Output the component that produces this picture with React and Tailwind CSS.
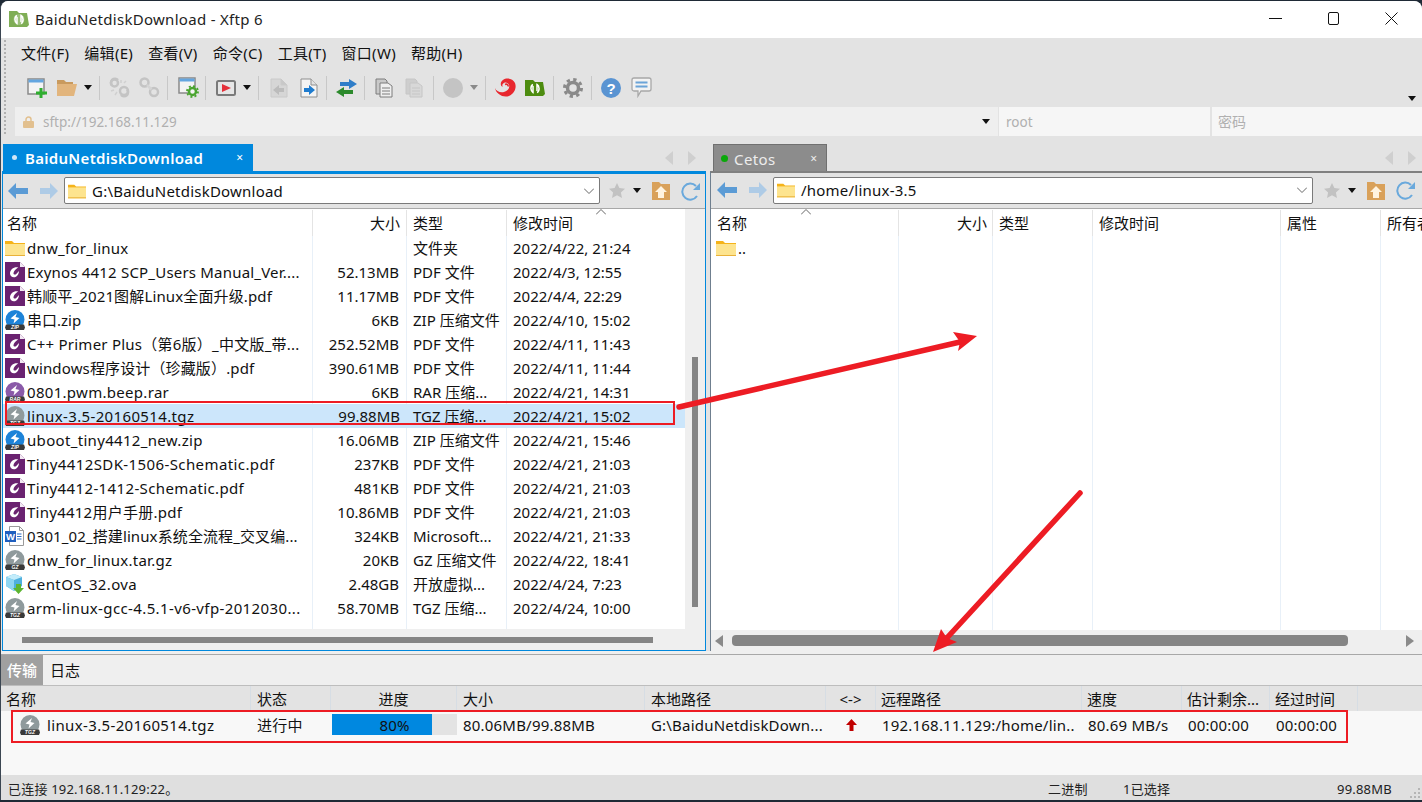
import React from "react";

const files = [
  { name: "dnw_for_linux", size: "", type: "文件夹", date: "2022/4/22, 21:24", icon: "folder", track: "tracking-[0.25px]" },
  { name: "Exynos 4412 SCP_Users Manual_Ver....", size: "52.13MB", type: "PDF 文件", date: "2022/4/3, 12:55", icon: "pdf", track: "tracking-[0.2px]" },
  { name: "韩顺平_2021图解Linux全面升级.pdf", size: "11.17MB", type: "PDF 文件", date: "2022/4/4, 22:29", icon: "pdf", track: "tracking-[0.14px]" },
  { name: "串口.zip", size: "6KB", type: "ZIP 压缩文件", date: "2022/4/10, 15:02", icon: "zip", track: "" },
  { name: "C++ Primer Plus（第6版）_中文版_带...", size: "252.52MB", type: "PDF 文件", date: "2022/4/11, 11:43", icon: "pdf", track: "tracking-[0.24px]" },
  { name: "windows程序设计（珍藏版）.pdf", size: "390.61MB", type: "PDF 文件", date: "2022/4/11, 11:44", icon: "pdf", track: "tracking-[0.14px]" },
  { name: "0801.pwm.beep.rar", size: "6KB", type: "RAR 压缩...", date: "2022/4/21, 14:31", icon: "rar", track: "tracking-[0.3px]" },
  { name: "linux-3.5-20160514.tgz", size: "99.88MB", type: "TGZ 压缩...", date: "2022/4/21, 15:02", icon: "tgz", selected: true, track: "tracking-[0.36px]" },
  { name: "uboot_tiny4412_new.zip", size: "16.06MB", type: "ZIP 压缩文件", date: "2022/4/21, 15:46", icon: "zip", track: "tracking-[0.32px]" },
  { name: "Tiny4412SDK-1506-Schematic.pdf", size: "237KB", type: "PDF 文件", date: "2022/4/21, 21:03", icon: "pdf", track: "tracking-[0.4px]" },
  { name: "Tiny4412-1412-Schematic.pdf", size: "481KB", type: "PDF 文件", date: "2022/4/21, 21:03", icon: "pdf", track: "tracking-[0.37px]" },
  { name: "Tiny4412用户手册.pdf", size: "10.86MB", type: "PDF 文件", date: "2022/4/21, 21:03", icon: "pdf", track: "tracking-[0.25px]" },
  { name: "0301_02_搭建linux系统全流程_交叉编...", size: "324KB", type: "Microsoft...", date: "2022/4/21, 21:33", icon: "word", track: "tracking-[0.11px]" },
  { name: "dnw_for_linux.tar.gz", size: "20KB", type: "GZ 压缩文件", date: "2022/4/22, 18:41", icon: "gz", track: "tracking-[0.25px]" },
  { name: "CentOS_32.ova", size: "2.48GB", type: "开放虚拟...", date: "2022/4/24, 7:23", icon: "ova", track: "tracking-[0.38px]" },
  { name: "arm-linux-gcc-4.5.1-v6-vfp-2012030...", size: "58.70MB", type: "TGZ 压缩...", date: "2022/4/24, 10:00", icon: "tgz", track: "tracking-[0.38px]" },
];

const FolderIcon = ({ size = 20 }) => (
  <svg width={size} height={size} viewBox="0 0 20 20" className="shrink-0">
    <path d="M0 3h7l2 2h11v13H0z" fill="#f5b31a" />
    <rect x="0" y="6" width="20" height="12" fill="#fde48f" />
    <rect x="0" y="17" width="20" height="1" fill="#e9b23a" />
  </svg>
);

const PdfIcon = () => (
  <svg width="20" height="20" viewBox="0 0 20 20" className="shrink-0">
    <path d="M0 0h15l5 5v15H0z" fill="#6a2270" />
    <path d="M15 0v5h5z" fill="#f3eaf4" />
    <path d="M13.500 5.500C9 4.500 5 7.500 5 11.500c0 3 3 4.500 5.500 3.500 2.300-1 3.500-3.500 3.500-6l-3 3.200c-.8.800-2.800.5-2.500-1.200.3-2 2.500-4 4.500-5.500z" fill="#fff" />
  </svg>
);

const ArchiveIcon = ({ color, label }) => (
  <svg width="20" height="20" viewBox="0 0 20 20" className="shrink-0">
    <circle cx="10" cy="9.500" r="9.500" fill={color} />
    <path d="M5.500 8.500L12 3l-1.500 4 4 1-6 5.500 1-4z" fill="#fff" />
    <path d="M1 14.500h18l1 3-1 2.500H1L0 17.500z" fill="#3a3a3a" />
    <text x="10" y="19" textAnchor="middle" fontSize="5" fontWeight="700" fontStyle="italic" fill="#fff" className="[font-family:'Liberation_Sans',sans-serif]">
      {label}
    </text>
  </svg>
);

const WordIcon = () => (
  <svg width="20" height="20" viewBox="0 0 20 20" className="shrink-0">
    <path d="M4.500 .5h10l4 4v15h-14z" fill="#fff" stroke="#9a9a9a" />
    <path d="M14.500 .5v4h4" fill="none" stroke="#9a9a9a" />
    <path d="M12 8h4.500M12 10.500h4.500M12 13h4.500" stroke="#2b6cc4" />
    <rect x="0" y="5" width="11" height="11" fill="#1f5fbf" />
    <text x="5.500" y="14" textAnchor="middle" fontSize="9.500" fontWeight="700" fill="#fff" className="[font-family:'Liberation_Sans',sans-serif]">
      W
    </text>
  </svg>
);

const OvaIcon = () => (
  <svg width="20" height="20" viewBox="0 0 20 20" className="shrink-0">
    <path d="M9 0l8 3v9l-8 5-8-5V3z" fill="#4fb0de" />
    <path d="M1 3l8 3 8-3-8-3z" fill="#c3ecfa" />
    <path d="M9 6v11l-8-5V3z" fill="#8fd6f2" />
    <path d="M11 10h5v4h3l-5.500 6L8 14h3z" fill="#5cb531" />
  </svg>
);

const FileIcon = ({ kind }) => {
  if (kind === "folder") return <FolderIcon />;
  if (kind === "pdf") return <PdfIcon />;
  if (kind === "zip") return <ArchiveIcon color="#1d83d8" label="ZIP" />;
  if (kind === "rar") return <ArchiveIcon color="#8a5aa8" label="RAR" />;
  if (kind === "tgz") return <ArchiveIcon color="#8f9a9c" label="TGZ" />;
  if (kind === "gz") return <ArchiveIcon color="#8f9a9c" label="GZ" />;
  if (kind === "word") return <WordIcon />;
  return <OvaIcon />;
};

const Drop = ({ color = "#111", className = "" }) => (
  <svg width="8" height="5" viewBox="0 0 8 5" className={`shrink-0 ${className}`}>
    <path d="M0 0h8L4 5z" fill={color} />
  </svg>
);

const Sep = ({ className = "" }) => <div className={`w-px h-[24px] bg-[#c8c8c8] shrink-0 ${className}`} />;

const DocIcon = ({ right }) => (
  <svg width="18" height="20" viewBox="0 0 18 20" className="shrink-0">
    <path d="M1 1h10l6 6v12H1z" fill={right ? "#f4f4f4" : "#d6d6d6"} stroke={right ? "#8f8f8f" : "#cacaca"} />
    <path d="M11 1v6h6" fill={right ? "#e2e2e2" : "#c8c8c8"} stroke={right ? "#8f8f8f" : "#cacaca"} />
    {right ? (
      <path d="M4 10h5V7l6 5-6 5v-3H4z" fill="#1f7ccf" />
    ) : (
      <path d="M14 10H9V7l-6 5 6 5v-3h5z" fill="#bcbcbc" />
    )}
  </svg>
);

const CopyIcon = ({ faded }) => {
  const edge = faded ? "#c6c6c6" : "#7d7d7d";
  return (
    <svg width="18" height="20" viewBox="0 0 18 20" className="shrink-0">
      <path d="M1 1h9l2 2v13H1z" fill={faded ? "#cecece" : "#c9c9c9"} stroke={edge} />
      <path d="M5 5h8l4 3v11H5z" fill={faded ? "#d8d8d8" : "#efefef"} stroke={edge} />
      <path d="M7 10h8M7 13h8M7 16h8" stroke={edge} />
    </svg>
  );
};

const LinkIcon = ({ broken }) => (
  <svg width="21" height="21" viewBox="0 0 21 21" className="shrink-0">
    {broken ? (
      <>
        <path d="M9 3A4 4 0 0 0 3 8.500" fill="none" stroke="#c4c4c4" strokeWidth="2.500" />
        <path d="M12 18a4 4 0 0 0 6-5.500" fill="none" stroke="#c4c4c4" strokeWidth="2.500" />
        <path d="M12 3v3M15 6l2-2M2 14l3-1M6 18l2-3" stroke="#d0d0d0" strokeWidth="1.500" />
        <circle cx="15" cy="14" r="4" fill="none" stroke="#c4c4c4" strokeWidth="2.500" />
        <circle cx="5.500" cy="6" r="3.500" fill="none" stroke="#c4c4c4" strokeWidth="2.500" />
      </>
    ) : (
      <>
        <circle cx="5.500" cy="5.500" r="4" fill="none" stroke="#c4c4c4" strokeWidth="2.500" />
        <circle cx="15" cy="15" r="4" fill="none" stroke="#c4c4c4" strokeWidth="2.500" />
        <path d="M8 8l4.500 4.500" stroke="#d4d4d4" strokeWidth="2.500" />
      </>
    )}
  </svg>
);

const GearIcon = ({ size = 20, color = "#8a8a8a" }) => (
  <svg width={size} height={size} viewBox="0 0 20 20" className="shrink-0">
    <circle cx="10" cy="10" r="5.500" fill="none" stroke={color} strokeWidth="3.500" />
    <circle cx="10" cy="10" r="8.500" fill="none" stroke={color} strokeWidth="3" strokeDasharray="3.300 3.370" />
  </svg>
);

const NewSessionIcon = () => (
  <svg width="20" height="20" viewBox="0 0 20 20" className="shrink-0">
    <rect x="1" y="1" width="16" height="15" fill="#f4f4f4" stroke="#8a8a8a" strokeWidth="1.500" />
    <rect x="1.500" y="1.500" width="15" height="3" fill="#64a6e0" />
    <path d="M12.500 10h3v3.500H20v3h-4.500V20h-3v-3.500H9v-3h3.500z" fill="#2fae2f" />
  </svg>
);

const OpenIcon = () => (
  <svg width="20" height="16" viewBox="0 0 20 16" className="shrink-0">
    <path d="M0 0h7l2 2h7v3H0z" fill="#c99a5e" />
    <path d="M0 4h20l-3 12H0z" fill="#e2b57d" />
  </svg>
);

const SessionGearIcon = () => (
  <svg width="21" height="21" viewBox="0 0 21 21" className="shrink-0">
    <rect x="1" y="1" width="16" height="15" fill="#f4f4f4" stroke="#8a8a8a" strokeWidth="1.500" />
    <rect x="1.500" y="1.500" width="15" height="3" fill="#64a6e0" />
    <circle cx="14.500" cy="14.500" r="3.500" fill="#f4f4f4" stroke="#4aa52f" strokeWidth="2.500" />
    <circle cx="14.500" cy="14.500" r="5.500" fill="none" stroke="#4aa52f" strokeWidth="1.800" strokeDasharray="2 2.300" />
  </svg>
);

const ScreenIcon = () => (
  <svg width="20" height="16" viewBox="0 0 20 16" className="shrink-0">
    <rect x="1" y="1" width="18" height="14" rx="1.500" fill="#e6e6e6" stroke="#7a7a7a" strokeWidth="2" />
    <path d="M6 4l9 4-9 4z" fill="#e5303a" />
  </svg>
);

const SwapIcon = () => (
  <svg width="21" height="18" viewBox="0 0 21 18" className="shrink-0">
    <path d="M4 3h9V0l8 5-8 5V7H4z" fill="#2f7dc8" />
    <path d="M17 11H8V8l-8 5 8 5v-3h9z" fill="#2c8a2c" />
  </svg>
);

const SwirlIcon = () => (
  <svg width="21" height="21" viewBox="0 0 21 21" className="shrink-0">
    <path d="M0 11c1 3 5 5 9 4 4-1 6-4 5-7-.7-2-3-3-5-2-2 1-2 3-1 4-3-1-3-5 0-7 4-3 10-1 12 3 2 5-1 11-6 13-6 2-13-2-14-8z" fill="#e8272e" />
    <path d="M10 7.500c2-1 3.500.5 3 2" stroke="#e8272e" strokeWidth="1.600" fill="none" />
  </svg>
);

const XftpIcon = ({ light }) => (
  <svg width="20" height="16" viewBox="0 0 20 16" className="shrink-0">
    <path d="M0 0h8l2 2h8l2 12-2 2H0z" fill={light ? "#7fae55" : "#4d8c10"} />
    <circle cx="10" cy="8.500" r="5.500" fill={light ? "#eef5e6" : "none"} opacity={light ? 0.25 : 1} />
    <path d="M8 4.500C5 6 5.500 11 8 12.500V6M12 12.500c3-1.500 2.500-6.500 0-8V11" stroke="#fff" strokeWidth="1.500" fill="none" />
  </svg>
);

const HelpIcon = () => (
  <svg width="20" height="20" viewBox="0 0 20 20" className="shrink-0">
    <circle cx="10" cy="10" r="10" fill="#5a94d2" />
    <text x="10" y="15.500" textAnchor="middle" fontSize="15" fontWeight="700" fill="#fff" className="[font-family:'Liberation_Sans',sans-serif]">
      ?
    </text>
  </svg>
);

const ChatIcon = () => (
  <svg width="21" height="21" viewBox="0 0 21 21" className="shrink-0">
    <path d="M3 1h15a2 2 0 0 1 2 2v9a2 2 0 0 1-2 2h-8l-3 5v-5H3a2 2 0 0 1-2-2V3a2 2 0 0 1 2-2z" fill="#f3f3f3" stroke="#a8a8a8" strokeWidth="1.300" />
    <path d="M4.500 5.500h12M4.500 9.500h12" stroke="#6ba4d8" strokeWidth="2" />
  </svg>
);

const NavArrow = ({ dir, color }) => (
  <svg width="20" height="16" viewBox="0 0 20 16" className="shrink-0">
    {dir === "left" ? (
      <path d="M0 8l8-8v5h12v6H8v5z" fill={color} />
    ) : (
      <path d="M18 8l-8-8v5H0v6h10v5z" fill={color} />
    )}
  </svg>
);

const HomeFolder = () => (
  <svg width="18" height="19" viewBox="0 0 18 19" className="shrink-0">
    <path d="M0 1h7l2 2h9v16H0z" fill="#d9a15a" />
    <path d="M9 5l6 6h-3v6H6v-6H3z" fill="#fff3df" />
  </svg>
);

const RefreshIcon = () => (
  <svg width="20" height="20" viewBox="0 0 20 20" className="shrink-0">
    <path d="M16 5A8 8 0 1 0 17 15" fill="none" stroke="#6aa9dc" strokeWidth="2" />
    <path d="M13 9h7V2z" fill="#6aa9dc" />
  </svg>
);

const Star = () => (
  <svg width="16" height="15" viewBox="0 0 16 15" className="shrink-0">
    <path d="M8 0l2.400 5 5.600.7-4.100 3.800 1.100 5.500L8 12.300 3 15l1.100-5.500L0 5.700 5.600 5z" fill="#c2c2c2" />
  </svg>
);

const Chevron = ({ up }) => (
  <svg width="10" height="6" viewBox="0 0 10 6" className="shrink-0">
    <path d={up ? "M0 5.500l5-5 5 5" : "M0 .5l5 5 5-5"} fill="none" stroke="#666" />
  </svg>
);

const TabArrows = () => (
  <div className="flex items-center gap-[15px]">
    <svg width="8" height="14" viewBox="0 0 8 14"><path d="M8 0v14L0 7z" fill="#cfcfcf" /></svg>
    <svg width="8" height="14" viewBox="0 0 8 14"><path d="M0 0v14l8-7z" fill="#cfcfcf" /></svg>
  </div>
);

const NavBar = ({ path, height, backPad, inputW, toolsMl }) => (
  <div className={`${height} flex items-center bg-[#e3e3e3] border-b border-[#a8a8a8] pb-px shrink-0`}>
    <div className={`flex items-center gap-[12px] ${backPad}`}>
      <NavArrow dir="left" color="#5b9bd5" />
      <NavArrow dir="right" color="#aecbe6" />
    </div>
    <div className={`${inputW} h-[27px] ml-[4px] flex items-center bg-white border border-[#7a7a7a] rounded-[2px] pl-[3px] pr-[5px] shrink-0`}>
      <FolderIcon size={18} />
      <span className="ml-[6px] flex-1 text-[15px] leading-[20px] tracking-[0.22px] text-[#111] whitespace-nowrap">{path}</span>
      <Chevron />
    </div>
    <div className={`${toolsMl} flex items-center`}>
      <Star />
      <Drop className="ml-[8px]" />
      <div className="ml-[11px]"><HomeFolder /></div>
      <div className="ml-[10px]"><RefreshIcon /></div>
    </div>
  </div>
);

const Cell = ({ className = "", children }) => (
  <div className={`h-full flex items-center whitespace-nowrap shrink-0 ${className}`}>{children}</div>
);

const LocalRow = ({ file }) => (
  <div className={`h-[24px] flex text-[15px] leading-[20px] text-[#111] shrink-0 ${file.selected ? "bg-[#cce6fb]" : ""}`}>
    <Cell className={`w-[310px] pl-[2px] gap-[2px] overflow-hidden ${file.selected ? "" : "border-r border-[#e8f0f8]"}`}>
      <FileIcon kind={file.icon} />
      <span className={file.track}>{file.name}</span>
    </Cell>
    <Cell className={`w-[94px] justify-end pr-[7px] ${file.selected ? "" : "border-r border-[#e8f0f8]"}`}>{file.size}</Cell>
    <Cell className={`w-[100px] pl-[6px] ${file.selected ? "" : "border-r border-[#e8f0f8]"}`}>{file.type}</Cell>
    <Cell className="flex-1 pl-[6px]">{file.date}</Cell>
  </div>
);

const LocalPane = () => (
  <div className="w-[704px] h-full flex flex-col border-x border-[#0088dd] border-b border-t-[3px] bg-white shrink-0 box-border">
    <NavBar path="G:\BaiduNetdiskDownload" height="h-[35px]" backPad="pl-[5px]" inputW="w-[536px]" toolsMl="ml-[9px]" />
    <div className="flex-1 min-h-0 flex">
      <div className="w-[682px] flex flex-col shrink-0">
        <div className="relative h-[27px] flex pt-[1px] text-[15px] leading-[20px] text-[#111] shrink-0">
          <Cell className="w-[310px] pl-[4px] border-r border-[#e4e4e4]">名称</Cell>
          <Cell className="w-[94px] justify-end pr-[6px] border-r border-[#e4e4e4]">大小</Cell>
          <Cell className="w-[100px] pl-[6px] border-r border-[#e4e4e4]">类型</Cell>
          <Cell className="flex-1 pl-[6px]">修改时间</Cell>
          <div className="absolute left-[593px] top-0"><Chevron up /></div>
        </div>
        {files.map((file) => (
          <LocalRow key={file.name} file={file} />
        ))}
        <div className="flex-1 flex">
          <div className="w-[310px] border-r border-[#e8f0f8]" />
          <div className="w-[94px] border-r border-[#e8f0f8]" />
          <div className="w-[100px] border-r border-[#e8f0f8]" />
        </div>
        <div className="h-[21px] bg-[#efefef] flex items-center pl-[19px] shrink-0">
          <div className="w-[631px] h-[6px] bg-[#858585]" />
        </div>
      </div>
      <div className="flex-1 bg-[#efefef] pl-[7px] pt-[148px]">
        <div className="w-[6px] h-[250px] bg-[#858585]" />
      </div>
    </div>
  </div>
);

const RemotePane = () => (
  <div className="flex-1 min-w-0 h-full flex flex-col border-l border-[#6f7f8f] border-t-[2px] border-t-[#808080] bg-white box-border">
    <NavBar path="/home/linux-3.5" height="h-[36px]" backPad="pl-[6px]" inputW="w-[540px]" toolsMl="ml-[11px]" />
    <div className="flex-1 min-h-0 flex flex-col overflow-hidden">
      <div className="relative h-[27px] flex pt-[1px] text-[15px] leading-[20px] text-[#111] shrink-0">
        <Cell className="w-[188px] pl-[6px] border-r border-[#e4e4e4]">名称</Cell>
        <Cell className="w-[94px] justify-end pr-[5px] border-r border-[#e4e4e4]">大小</Cell>
        <Cell className="w-[100px] pl-[6px] border-r border-[#e4e4e4]">类型</Cell>
        <Cell className="w-[188px] pl-[6px] border-r border-[#e4e4e4]">修改时间</Cell>
        <Cell className="w-[100px] pl-[6px] border-r border-[#e4e4e4]">属性</Cell>
        <Cell className="flex-1 pl-[6px]">所有者</Cell>
        <div className="absolute left-[90px] top-0"><Chevron up /></div>
      </div>
      <div className="h-[24px] flex text-[15px] leading-[20px] text-[#111] shrink-0">
        <Cell className="w-[188px] pl-[5px] gap-[2px] border-r border-[#e8f0f8]">
          <FolderIcon />
          <span>..</span>
        </Cell>
        <div className="w-[94px] border-r border-[#e8f0f8]" />
        <div className="w-[100px] border-r border-[#e8f0f8]" />
        <div className="w-[188px] border-r border-[#e8f0f8]" />
        <div className="w-[100px] border-r border-[#e8f0f8]" />
      </div>
      <div className="flex-1 flex">
        <div className="w-[188px] border-r border-[#e8f0f8]" />
        <div className="w-[94px] border-r border-[#e8f0f8]" />
        <div className="w-[100px] border-r border-[#e8f0f8]" />
        <div className="w-[188px] border-r border-[#e8f0f8]" />
        <div className="w-[100px] border-r border-[#e8f0f8]" />
      </div>
      <div className="h-[21px] bg-[#efefef] flex items-center pl-[4px] pr-[8px] shrink-0">
        <svg width="8" height="12" viewBox="0 0 8 12"><path d="M8 0v12L0 6z" fill="#8a8a8a" /></svg>
        <div className="ml-[9px] w-[616px] h-[11px] rounded-[4px] bg-[#858585]" />
        <svg width="8" height="12" viewBox="0 0 8 12" className="ml-auto"><path d="M0 0v12l8-6z" fill="#8a8a8a" /></svg>
      </div>
    </div>
  </div>
);

const transferCols = [
  { w: "w-[250px]", label: "名称", cls: "pl-[5px]" },
  { w: "w-[80px]", label: "状态", cls: "pl-[6px]" },
  { w: "w-[126px]", label: "进度", cls: "justify-center" },
  { w: "w-[188px]", label: "大小", cls: "pl-[6px]" },
  { w: "w-[181px]", label: "本地路径", cls: "pl-[6px]" },
  { w: "w-[50px]", label: "<->", cls: "justify-center" },
  { w: "w-[206px]", label: "远程路径", cls: "pl-[5px]" },
  { w: "w-[100px]", label: "速度", cls: "pl-[5px]" },
  { w: "w-[88px]", label: "估计剩余...", cls: "pl-[5px]" },
  { w: "w-[88px]", label: "经过时间", cls: "pl-[5px]" },
];

const TransferPanel = () => (
  <div className="flex-1 min-h-0 flex flex-col border-t border-[#a8a8a8] bg-[#f8f8f8]">
    <div className="h-[30px] flex items-stretch bg-[#efefef] text-[15px] leading-[20px] shrink-0">
      <div className="w-[42px] flex items-center justify-center bg-[#a0a0a0] text-white font-medium">传输</div>
      <div className="w-[44px] flex items-center justify-center text-[#111]">日志</div>
    </div>
    <div className="h-[26px] flex bg-[#e3e3e3] border-t border-[#bdbdbd] text-[15px] leading-[20px] text-[#111] shrink-0">
      {transferCols.map((col) => (
        <Cell key={col.label} className={`${col.w} ${col.cls} border-r border-[#d6dde4]`}>{col.label}</Cell>
      ))}
    </div>
    <div className="h-[25px] flex text-[15px] leading-[20px] tracking-[0.2px] text-[#111] mt-[1px] shrink-0">
      <Cell className="w-[250px] pl-[19px] gap-[7px]">
        <ArchiveIcon color="#8f9a9c" label="TGZ" />
        <span className="tracking-[0.36px]">linux-3.5-20160514.tgz</span>
      </Cell>
      <Cell className="w-[80px] pl-[6px]">进行中</Cell>
      <Cell className="w-[126px] pl-px">
        <div className="relative w-[125px] h-[21px] bg-[#e3e3e3]">
          <div className="h-full w-[100px] bg-[#0088e0]" />
          <div className="absolute inset-0 flex items-center justify-center">80%</div>
        </div>
      </Cell>
      <Cell className="w-[188px] pl-[6px]">80.06MB/99.88MB</Cell>
      <Cell className="w-[181px] pl-[6px]">G:\BaiduNetdiskDown...</Cell>
      <Cell className="w-[50px] justify-center">
        <svg width="11" height="12" viewBox="0 0 11 12"><path d="M5.500 0L11 6H7.500v6h-4V6H0z" fill="#c00000" /></svg>
      </Cell>
      <Cell className="w-[206px] pl-[6px]">192.168.11.129:/home/lin..</Cell>
      <Cell className="w-[100px] pl-[6px]">80.69 MB/s</Cell>
      <Cell className="w-[88px] pl-[6px]">00:00:00</Cell>
      <Cell className="w-[88px] pl-[6px]">00:00:00</Cell>
    </div>
  </div>
);

const StatusBar = () => (
  <div className="relative h-[25px] flex items-center bg-[#dfdfdf] text-[13px] leading-[20px] tracking-[0.2px] text-[#222] pl-[7px] pt-[2px] shrink-0">
    <span className="w-[1040px]">已连接 192.168.11.129:22。</span>
    <span className="w-[75px]">二进制</span>
    <span className="w-[214px]">1已选择</span>
    <span>99.88MB</span>
    <svg width="10" height="10" viewBox="0 0 10 10" className="absolute right-[2px] bottom-[2px]">
      <path d="M8 0h2v2H8zM4 4h2v2H4zM8 4h2v2H8zM0 8h2v2H0zM4 8h2v2H4zM8 8h2v2H8z" fill="#b5b5b5" />
    </svg>
  </div>
);

const Annotations = () => (
  <svg width="1422" height="802" viewBox="0 0 1422 802" className="absolute left-0 top-0 pointer-events-none">
    <rect x="6" y="402" width="668" height="22" fill="none" stroke="#ed1c24" strokeWidth="2" />
    <rect x="12" y="711" width="1335" height="31" fill="none" stroke="#ed1c24" strokeWidth="2" />
    <path d="M679 407L960 342" stroke="#ed1c24" strokeWidth="5.500" strokeLinecap="round" />
    <path d="M977 336L953 332L960 342L958 351z" fill="#ed1c24" />
    <path d="M1080 493L945 640" stroke="#ed1c24" strokeWidth="5.500" strokeLinecap="round" />
    <path d="M933 652L941 629L947 638L957 642z" fill="#ed1c24" />
  </svg>
);

const App = () => {
  return (
    <div className="relative w-[1422px] h-[802px] overflow-hidden bg-[#1f2a36] [font-family:'Noto_Sans','Noto_Sans_CJK_SC',sans-serif]">
      <div className="h-[799px] mt-px flex flex-col rounded-t-[8px] overflow-hidden bg-[#e3e3e3] border-l border-[#3b4652]">
        <div className="h-[37px] flex items-center bg-white pl-[8px] pb-[2px] shrink-0">
          <XftpIcon light />
          <span className="ml-[6px] text-[15px] leading-[20px] tracking-[0.3px] text-[#222]">BaiduNetdiskDownload - Xftp 6</span>
          <div className="ml-auto flex items-center pr-[24px] gap-[45px]">
            <svg width="13" height="13" viewBox="0 0 13 13"><path d="M0 6.500h13" stroke="#111" /></svg>
            <svg width="13" height="13" viewBox="0 0 13 13"><rect x="1.500" y=".5" width="10" height="12" rx="1.500" fill="none" stroke="#111" /></svg>
            <svg width="13" height="13" viewBox="0 0 13 13"><path d="M.5.500l12 12M12.500.5l-12 12" stroke="#111" /></svg>
          </div>
        </div>

        <div className="h-[98px] flex shrink-0">
          <div className="w-[4px] ml-[3px] border-l-2 border-dotted border-[#b0b0b0] my-[2px] shrink-0" />
          <div className="flex-1 flex flex-col min-w-0">
            <div className="h-[33px] flex items-center pl-[13px] pb-[3px] gap-[15px] text-[15px] leading-[20px] tracking-[0.3px] text-[#111] shrink-0">
              <span>文件(F)</span>
              <span>编辑(E)</span>
              <span>查看(V)</span>
              <span>命令(C)</span>
              <span>工具(T)</span>
              <span>窗口(W)</span>
              <span>帮助(H)</span>
            </div>
            <div className="relative h-[36px] flex items-center pl-[19px] pb-[3px] shrink-0">
              <NewSessionIcon />
              <div className="ml-[10px]"><OpenIcon /></div>
              <Drop className="ml-[7px]" />
              <Sep className="ml-[7px]" />
              <div className="ml-[9px]"><LinkIcon broken /></div>
              <div className="ml-[9px]"><LinkIcon /></div>
              <Sep className="ml-[7px]" />
              <div className="ml-[10px]"><SessionGearIcon /></div>
              <Sep className="ml-[6px]" />
              <div className="ml-[10px]"><ScreenIcon /></div>
              <Drop className="ml-[7px]" />
              <Sep className="ml-[7px]" />
              <div className="ml-[11px]"><DocIcon /></div>
              <div className="ml-[12px]"><DocIcon right /></div>
              <Sep className="ml-[8px]" />
              <div className="ml-[9px]"><SwapIcon /></div>
              <Sep className="ml-[7px]" />
              <div className="ml-[10px]"><CopyIcon /></div>
              <div className="ml-[12px]"><CopyIcon faded /></div>
              <Sep className="ml-[10px]" />
              <div className="ml-[9px] w-[20px] h-[20px] rounded-full bg-[#c4c4c4] shrink-0" />
              <Drop color="#8a8a8a" className="ml-[7px]" />
              <Sep className="ml-[7px]" />
              <div className="ml-[9px]"><SwirlIcon /></div>
              <div className="ml-[9px]"><XftpIcon /></div>
              <Sep className="ml-[8px]" />
              <div className="ml-[9px]"><GearIcon /></div>
              <Sep className="ml-[8px]" />
              <div className="ml-[9px]"><HelpIcon /></div>
              <div className="ml-[10px]"><ChatIcon /></div>
              <Drop className="absolute right-[6px] bottom-[6px]" />
            </div>
            <div className="h-[29px] flex items-stretch pl-[7px] text-[13.5px] leading-[18px] text-[#b0b0b0] shrink-0">
              <div className="w-[983px] bg-[#efefef] flex items-center pl-[8px] pr-[8px]">
                <svg width="11" height="12" viewBox="0 0 11 12" className="shrink-0">
                  <path d="M3 5V3.500a2.500 2.500 0 0 1 5 0V5" fill="none" stroke="#e2c08f" strokeWidth="1.500" />
                  <rect x="0" y="5" width="11" height="7" rx="1" fill="#e2c08f" />
                </svg>
                <span className="ml-[9px]">sftp://192.168.11.129</span>
                <Drop className="ml-auto" />
              </div>
              <div className="w-[211px] ml-px bg-[#f6f6f6] flex items-center pl-[7px]">root</div>
              <div className="flex-1 ml-[2px] bg-[#f6f6f6] flex items-center pl-[6px] text-[14px]">密码</div>
            </div>
          </div>
        </div>

        <div className="h-[35px] flex items-end text-[15px] leading-[20px] shrink-0">
          <div className="w-[706px] flex items-end justify-between pl-[2px] pr-[11px] shrink-0">
            <div className="w-[250px] h-[27px] bg-[#0088dd] flex items-center pl-[9px] pr-[10px] text-white font-semibold">
              <span className="w-[5px] h-[5px] rounded-full bg-[#cfe6f7] shrink-0" />
              <span className="ml-[8px] tracking-[0.3px]">BaiduNetdiskDownload</span>
              <span className="ml-auto text-[12px] font-normal">×</span>
            </div>
            <div className="mb-[6px]"><TabArrows /></div>
          </div>
          <div className="flex-1 flex items-end justify-between pl-[6px] pr-[6px]">
            <div className="w-[114px] h-[27px] bg-[#8c8c8c] border border-b-0 border-[#707070] flex items-center pl-[7px] pr-[9px] pt-px text-[#ededed]">
              <span className="w-[7px] h-[7px] rounded-full bg-[#0aa80a] shrink-0" />
              <span className="ml-[6px] tracking-[0.4px]">Cetos</span>
              <span className="ml-auto text-[12px]">×</span>
            </div>
            <div className="mb-[6px]"><TabArrows /></div>
          </div>
        </div>

        <div className="h-[480px] flex gap-[4px] shrink-0 pl-px">
          <LocalPane />
          <RemotePane />
        </div>

        <div className="h-[3px] bg-[#efefef] shrink-0" />
        <TransferPanel />
        <StatusBar />
      </div>
      <Annotations />
    </div>
  );
};

export default App;
